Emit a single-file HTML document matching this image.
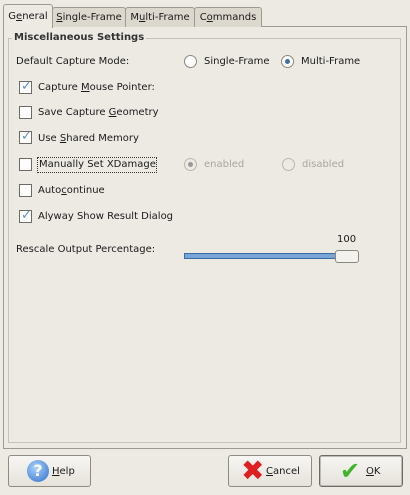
<!DOCTYPE html><html><head><style>
body{margin:0;width:410px;height:495px;background:#edeae4;font-family:"DejaVu Sans","Liberation Sans",sans-serif;font-size:10px;color:#1a1a1a;position:relative;overflow:hidden}
.a{position:absolute;white-space:nowrap}
.tab{position:absolute;top:7px;height:19px;border:1px solid #9d9a92;border-bottom:none;border-radius:3px 3px 0 0;background:#ddd8ce;line-height:20px;text-align:center}
.cb{position:absolute;left:19px;width:11px;height:11px;border:1px solid #6e6b65;background:#fff}
.rd{position:absolute;width:11px;height:11px;border:1px solid #8a877f;border-radius:50%;background:#fff}
.btn{position:absolute;top:455px;height:30px;border:1px solid #8f8b83;border-radius:3px;background:linear-gradient(#f7f6f3,#e6e2db)}
.ck{position:absolute;left:1px;top:-3px;color:#5a8ed0;font-size:13px;font-weight:bold}
u{text-decoration:underline}
</style></head><body>
<div class="a" style="left:3px;top:26px;width:402px;height:421px;border:1px solid #9d9a92"></div>
<div class="tab" style="left:3px;top:4px;height:23px;width:48px;background:#edeae4;line-height:23px">G<u>e</u>neral</div>
<div class="tab" style="left:52px;width:72px"><u>S</u>ingle-Frame</div>
<div class="tab" style="left:125px;width:68px">M<u>u</u>lti-Frame</div>
<div class="tab" style="left:194px;width:66px">C<u>o</u>mmands</div>
<div class="a" style="left:8px;top:38px;width:391px;height:403px;border:1px solid #c6c2b9"></div>
<div class="a" style="left:12px;top:32px;background:#edeae4;padding:0 2px;font-weight:bold;color:#333">Miscellaneous Settings</div>
<div class="a" style="left:16px;top:56px">Default Capture Mode:</div>
<div class="rd" style="left:184px;top:55px"></div><div class="a" style="left:204px;top:56px">Single-Frame</div>
<div class="rd" style="left:281px;top:55px"><div style="position:absolute;left:3px;top:3px;width:5px;height:5px;border-radius:50%;background:#3d6ea8"></div></div><div class="a" style="left:301px;top:56px">Multi-Frame</div>
<div class="cb" style="top:81px"><span class="ck">✓</span></div><div class="a" style="left:38px;top:82px">Capture <u>M</u>ouse Pointer:</div>
<div class="cb" style="top:106px"></div><div class="a" style="left:38px;top:107px">Save Capture <u>G</u>eometry</div>
<div class="cb" style="top:131px"><span class="ck">✓</span></div><div class="a" style="left:38px;top:133px">Use <u>S</u>hared Memory</div>
<div class="cb" style="top:158px"></div><div class="a" style="left:37px;top:157px;border:1px dotted #333;padding:0 0 0 1px;height:14px;line-height:14px">Manually Set XDamage</div>
<div class="rd" style="left:184px;top:158px;border-color:#bbb7ae;background:#edeae4"><div style="position:absolute;left:3px;top:3px;width:5px;height:5px;border-radius:50%;background:#999"></div></div><div class="a" style="left:204px;top:159px;color:#aaa69e">enabled</div>
<div class="rd" style="left:282px;top:158px;border-color:#bbb7ae;background:#edeae4"></div><div class="a" style="left:302px;top:159px;color:#aaa69e">disabled</div>
<div class="cb" style="top:184px"></div><div class="a" style="left:38px;top:185px">Auto<u>c</u>ontinue</div>
<div class="cb" style="top:210px"><span class="ck">✓</span></div><div class="a" style="left:38px;top:211px">Alyway Show Result Dialog</div>
<div class="a" style="left:16px;top:244px">Rescale Output Percentage:</div>
<div class="a" style="left:337px;top:234px">100</div>
<div class="a" style="left:184px;top:253px;width:154px;height:4px;border:1px solid #3c6ea6;background:#7aa5d8"></div>
<div class="a" style="left:335px;top:250px;width:22px;height:11px;border:1px solid #8a877f;border-radius:3px;background:#f4f2ee"></div>
<div class="btn" style="left:8px;width:81px"><div class="a" style="left:18px;top:4px;width:22px;height:22px;border-radius:50%;background:radial-gradient(circle at 40% 35%,#a9d2ff,#2e6fc8);color:#fff;font-weight:bold;font-size:16px;text-align:center;line-height:22px">?</div><div class="a" style="left:43px;top:10px"><u>H</u>elp</div></div>
<div class="btn" style="left:228px;width:82px"><div class="a" style="left:12px;top:0px;color:#e02020;font-size:28px;font-weight:bold;line-height:30px">✖</div><div class="a" style="left:37px;top:10px"><u>C</u>ancel</div></div>
<div class="btn" style="left:319px;width:82px;border-color:#6e6b65;box-shadow:inset 0 0 0 1px #bbb"><div class="a" style="left:20px;top:0px;color:#3fb52a;font-size:24px;font-weight:bold;line-height:30px">✔</div><div class="a" style="left:46px;top:10px"><u>O</u>K</div></div>
</body></html>
